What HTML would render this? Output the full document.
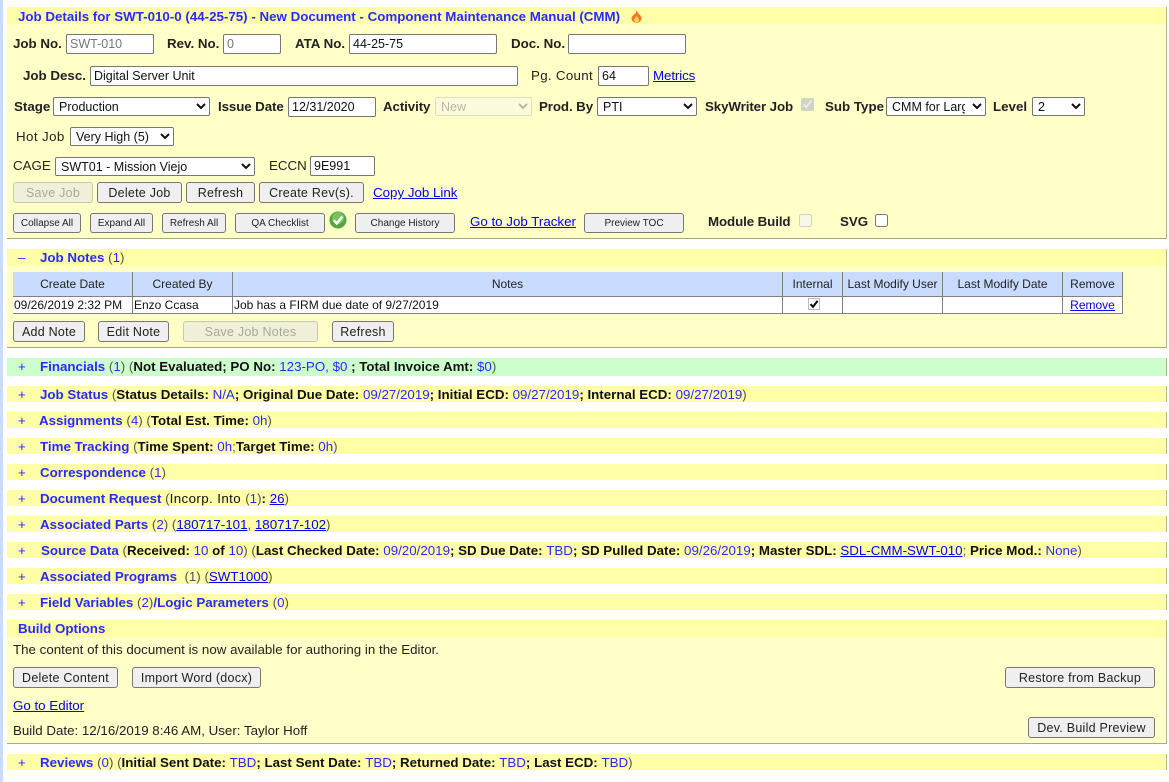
<!DOCTYPE html>
<html><head><meta charset="utf-8"><style>
html,body{margin:0;padding:0;background:#fff;width:1169px;height:782px;overflow:hidden}
body{position:relative;font:13.33px "Liberation Sans",Arial,sans-serif;color:#222}
.s{position:absolute;left:0;top:0;width:3px;height:782px;background:#c9dcff}
.h,.b{position:absolute;left:7px;width:1159px;background:#ffffa8;border-right:1px solid #b5b58a}
.b{background:#ffffc8;border-bottom:1px solid #aaa97c}
.t{position:absolute;white-space:nowrap;line-height:16px}
.l{font-weight:bold;color:#222}
.n{font-weight:normal;letter-spacing:.4px}
.c{color:#2a2aff}
.k{color:#2a2aff;font-weight:bold}
.t b{color:#111}
.g{color:#555}
.v{color:#2a2aff}
a{color:#0000ee;text-decoration:underline}
input,select,button{position:absolute;box-sizing:border-box;margin:0;font:12px "Liberation Sans",Arial,sans-serif}
input[type=text]{padding:0 3px;border:1px solid #767676;border-radius:2px;background:#fff;color:#111;font-size:12.5px}
input.d{color:#777}
select{padding:0 0 0 1px;background:#fff;border:1px solid #767676;border-radius:2px;color:#111;font-size:12.5px}
select:disabled{background:#fafae4;border-color:#d0d0c0;color:#999}
button{background:#efefef;border:1px solid #767676;border-radius:3px;color:#222;padding:0;font-size:12.5px;letter-spacing:.25px}
button.m{font-size:10px;letter-spacing:0}
button:disabled{background:#f0f0d8;border-color:#c8c8ae;color:#a8a8a0}
input[type=checkbox]{width:13px;height:13px}
table{position:absolute;left:13px;top:272px;width:1110px;border-collapse:separate;border-spacing:0;table-layout:fixed;font-size:12px;background:#fff}
th{background:#c9dcff;font-weight:normal;border-right:1px solid #808080;border-bottom:1px solid #808080;padding:0;color:#222;box-sizing:border-box;height:25px}
td{border-right:1px solid #808080;border-bottom:1px solid #808080;padding:0 1px;color:#111;white-space:nowrap;box-sizing:border-box;height:17px;line-height:15px}
</style></head><body>
<div class="s"></div>

<div class="b" style="top:24px;height:214px"></div>
<div class="h" style="top:7px;height:17px"></div>
<div class="t k" style="left:18px;top:9px">Job Details for SWT-010-0 (44-25-75) - New Document - Component Maintenance Manual (CMM)</div>
<svg style="position:absolute;left:631px;top:10px" width="11" height="13" viewBox="0 0 11 13"><path d="M5.5 0C6 3 10.5 5 10.5 8.5C10.5 11 8 12.8 5.5 12.8C3 12.8 .5 11 .5 8.5C.5 6.5 2.5 5.5 3 4C4.2 4.5 5.2 2.5 5.5 0Z" fill="#f47a2a"/><path d="M5.5 6C6 7.5 8 8.5 8 10C8 11.5 6.7 12.3 5.5 12.3C4.3 12.3 3 11.5 3 10C3 8.5 5 7.5 5.5 6Z" fill="#fdd65a"/></svg>

<div class="t l" style="left:13px;top:36px">Job No.</div><input class="d" type="text" value="SWT-010" style="left:66px;top:34px;width:88px;height:20px">
<div class="t l" style="left:167px;top:36px">Rev. No.</div><input class="d" type="text" value="0" style="left:223px;top:34px;width:58px;height:20px">
<div class="t l" style="left:295px;top:36px">ATA No.</div><input type="text" value="44-25-75" style="left:349px;top:34px;width:148px;height:20px">
<div class="t l" style="left:511px;top:36px">Doc. No.</div><input type="text" value="" style="left:568px;top:34px;width:118px;height:20px">

<div class="t l" style="left:23px;top:68px">Job Desc.</div><input type="text" value="Digital Server Unit" style="left:90px;top:66px;width:428px;height:20px">
<div class="t l n" style="left:531px;top:68px;letter-spacing:.3px">Pg. Count</div><input type="text" value="64" style="left:598px;top:66px;width:51px;height:20px">
<a class="t" style="left:653px;top:68px;letter-spacing:-.1px" href="#">Metrics</a>

<div class="t l" style="left:14px;top:99px">Stage</div><select style="left:53px;top:97px;width:157px;height:19px"><option>Production</option></select>
<div class="t l" style="left:218px;top:99px;letter-spacing:-.1px">Issue Date</div><input type="text" value="12/31/2020" style="left:288px;top:97px;width:88px;height:20px">
<div class="t l" style="left:383px;top:99px;letter-spacing:-.1px">Activity</div><select disabled style="left:435px;top:97px;width:97px;height:19px"><option>New</option></select>
<div class="t l" style="left:539px;top:99px;letter-spacing:-.1px">Prod. By</div><select style="left:597px;top:97px;width:100px;height:19px"><option>PTI</option></select>
<div class="t l" style="left:705px;top:99px;letter-spacing:-.1px">SkyWriter Job</div><input type="checkbox" checked disabled style="left:801px;top:98px;margin:0">
<div class="t l" style="left:825px;top:99px">Sub Type</div><select style="left:886px;top:97px;width:100px;height:19px;padding-right:4px"><option>CMM for Large</option></select>
<div class="t l" style="left:993px;top:99px">Level</div><select style="left:1032px;top:97px;width:53px;height:19px"><option>2</option></select>

<div class="t l n" style="left:16px;top:129px">Hot Job</div><select style="left:70px;top:127px;width:104px;height:19px"><option>Very High (5)</option></select>

<div class="t l n" style="left:13px;top:158px;letter-spacing:0">CAGE</div><select style="left:55px;top:157px;width:200px;height:19px"><option>SWT01 - Mission Viejo</option></select>
<div class="t l n" style="left:269px;top:158px;letter-spacing:0">ECCN</div><input type="text" value="9E991" style="left:310px;top:156px;width:65px;height:20px">

<button disabled style="left:13px;top:182px;width:80px;height:21px">Save Job</button>
<button style="left:97px;top:182px;width:85px;height:21px">Delete Job</button>
<button style="left:186px;top:182px;width:69px;height:21px">Refresh</button>
<button style="left:259px;top:182px;width:105px;height:21px">Create Rev(s).</button>
<a class="t" style="left:373px;top:185px" href="#">Copy Job Link</a>

<button class="m" style="left:13px;top:213px;width:68px;height:20px">Collapse All</button>
<button class="m" style="left:90px;top:213px;width:63px;height:20px">Expand All</button>
<button class="m" style="left:162px;top:213px;width:64px;height:20px">Refresh All</button>
<button class="m" style="left:235px;top:213px;width:90px;height:20px">QA Checklist</button>
<svg style="position:absolute;left:329px;top:211px" width="18" height="18" viewBox="0 0 18 18"><circle cx="9" cy="9" r="8.5" fill="#4fa83d"/><circle cx="9" cy="7" r="6" fill="#8fd07a" opacity=".6"/><path d="M4.8 9.2L7.8 12.4L13.4 5.6" fill="none" stroke="#fff" stroke-width="2.6"/></svg>
<button class="m" style="left:355px;top:213px;width:100px;height:20px">Change History</button>
<a class="t" style="left:470px;top:214px" href="#">Go to Job Tracker</a>
<button class="m" style="left:584px;top:213px;width:100px;height:20px">Preview TOC</button>
<div class="t l" style="left:708px;top:214px;letter-spacing:-.1px">Module Build</div><input type="checkbox" disabled style="left:799px;top:214px;margin:0">
<div class="t l" style="left:840px;top:214px">SVG</div><input type="checkbox" style="left:875px;top:214px;margin:0">

<div class="b" style="top:266px;height:81px"></div>
<div class="h" style="top:249px;height:17px"></div>
<div class="t c" style="left:18px;top:250px">&#8211;</div>
<div class="t" style="left:40px;top:250px"><span class="k">Job Notes</span> <span class="g">(</span><span class="v">1</span><span class="g">)</span></div>
<table><colgroup><col style="width:120px"><col style="width:100px"><col style="width:550px"><col style="width:60px"><col style="width:100px"><col style="width:120px"><col style="width:60px"></colgroup>
<tr><th>Create Date</th><th>Created By</th><th>Notes</th><th>Internal</th><th>Last Modify User</th><th>Last Modify Date</th><th>Remove</th></tr>
<tr><td>09/26/2019 2:32 PM</td><td>Enzo Ccasa</td><td>Job has a FIRM due date of 9/27/2019</td><td></td><td></td><td></td><td style="text-align:center"><a href="#">Remove</a></td></tr></table>
<svg style="position:absolute;left:808px;top:298px" width="12" height="12" viewBox="0 0 12 12"><rect x=".5" y=".5" width="11" height="11" fill="#fff" stroke="#bbb"/><path d="M2.5 6.2L5 8.8L9.6 2.8" fill="none" stroke="#000" stroke-width="2"/></svg>
<button style="left:13px;top:321px;width:72px;height:21px">Add Note</button>
<button style="left:98px;top:321px;width:71px;height:21px">Edit Note</button>
<button disabled style="left:183px;top:321px;width:135px;height:21px">Save Job Notes</button>
<button style="left:332px;top:321px;width:62px;height:21px">Refresh</button>

<div class="h" style="top:358px;height:18px;background:#ccffcc"></div>
<div class="t c" style="left:18px;top:359px">+</div>
<div class="t" style="left:40px;top:359px"><span class="k">Financials</span> <span class="g">(</span><span class="v">1</span><span class="g">) (</span><b>Not Evaluated; PO No: </b><span class="v">123-PO, $0</span> <b>; Total Invoice Amt: </b><span class="v">$0</span><span class="g">)</span></div>

<div class="h" style="top:386px;height:16px"></div>
<div class="t c" style="left:18px;top:387px">+</div>
<div class="t" style="left:40px;top:387px"><span class="k">Job Status</span> <span class="g">(</span><b>Status Details: </b><span class="v">N/A</span><b>; Original Due Date: </b><span class="v">09/27/2019</span><b>; Initial ECD: </b><span class="v">09/27/2019</span><b>; Internal ECD: </b><span class="v">09/27/2019</span><span class="g">)</span></div>

<div class="h" style="top:412px;height:16px"></div>
<div class="t c" style="left:18px;top:413px">+</div>
<div class="t" style="left:39px;top:413px"><span class="k">Assignments</span> <span class="g">(</span><span class="v">4</span><span class="g">) (</span><b>Total Est. Time: </b><span class="v">0h</span><span class="g">)</span></div>

<div class="h" style="top:438px;height:16px"></div>
<div class="t c" style="left:18px;top:439px">+</div>
<div class="t" style="left:40px;top:439px"><span class="k">Time Tracking</span> <span class="g">(</span><b>Time Spent: </b><span class="v">0h</span><span class="g">;</span><b>Target Time: </b><span class="v">0h</span><span class="g">)</span></div>

<div class="h" style="top:464px;height:16px"></div>
<div class="t c" style="left:18px;top:465px">+</div>
<div class="t" style="left:40px;top:465px"><span class="k">Correspondence</span> <span class="g">(</span><span class="v">1</span><span class="g">)</span></div>

<div class="h" style="top:490px;height:16px"></div>
<div class="t c" style="left:18px;top:491px">+</div>
<div class="t" style="left:40px;top:491px"><span class="k">Document Request</span> <span class="g">(</span><b style="font-weight:normal;letter-spacing:.4px">Incorp. Into </b><span class="g">(</span><span class="v">1</span><span class="g">)</span><b>: </b><a href="#">26</a><span class="g">)</span></div>

<div class="h" style="top:516px;height:16px"></div>
<div class="t c" style="left:18px;top:517px">+</div>
<div class="t" style="left:40px;top:517px"><span class="k">Associated Parts</span> <span class="g">(</span><span class="v">2</span><span class="g">) (</span><a href="#">180717-101</a><span class="g">,</span> <a href="#">180717-102</a><span class="g">)</span></div>

<div class="h" style="top:542px;height:16px"></div>
<div class="t c" style="left:18px;top:543px">+</div>
<div class="t" style="left:41px;top:543px"><span class="k">Source Data</span> <span class="g">(</span><b>Received: </b><span class="v">10</span><b> of </b><span class="v">10</span><span class="g">) (</span><b>Last Checked Date: </b><span class="v">09/20/2019</span><b>; SD Due Date: </b><span class="v">TBD</span><b>; SD Pulled Date: </b><span class="v">09/26/2019</span><b>; Master SDL: </b><a href="#">SDL-CMM-SWT-010</a><span class="g">;</span><b> Price Mod.: </b><span class="v">None</span><span class="g">)</span></div>

<div class="h" style="top:568px;height:16px"></div>
<div class="t c" style="left:18px;top:569px">+</div>
<div class="t" style="left:40px;top:569px"><span class="k">Associated Programs</span> &nbsp;<span class="g">(1) (</span><a href="#">SWT1000</a><span class="g">)</span></div>

<div class="h" style="top:594px;height:16px"></div>
<div class="t c" style="left:18px;top:595px">+</div>
<div class="t" style="left:40px;top:595px"><span class="k">Field Variables</span> <span class="g">(</span><span class="v">2</span><span class="g">)</span><span class="k">/Logic Parameters</span> <span class="g">(</span><span class="v">0</span><span class="g">)</span></div>

<div class="b" style="top:637px;height:106px"></div>
<div class="h" style="top:620px;height:17px"></div>
<div class="t k" style="left:18px;top:621px">Build Options</div>
<div class="t" style="left:13px;top:642px">The content of this document is now available for authoring in the Editor.</div>
<button style="left:13px;top:667px;width:105px;height:21px">Delete Content</button>
<button style="left:132px;top:667px;width:129px;height:21px">Import Word (docx)</button>
<button style="left:1005px;top:667px;width:150px;height:21px">Restore from Backup</button>
<a class="t" style="left:13px;top:698px" href="#">Go to Editor</a>
<div class="t" style="left:13px;top:723px">Build Date: 12/16/2019 8:46 AM, User: Taylor Hoff</div>
<button style="left:1028px;top:717px;width:127px;height:21px">Dev. Build Preview</button>

<div class="h" style="top:754px;height:16px"></div>
<div class="t c" style="left:18px;top:755px">+</div>
<div class="t" style="left:40px;top:755px"><span class="k">Reviews</span> <span class="g">(</span><span class="v">0</span><span class="g">) (</span><b>Initial Sent Date: </b><span class="v">TBD</span><b>; Last Sent Date: </b><span class="v">TBD</span><b>; Returned Date: </b><span class="v">TBD</span><b>; Last ECD: </b><span class="v">TBD</span><span class="g">)</span></div>
</body></html>
